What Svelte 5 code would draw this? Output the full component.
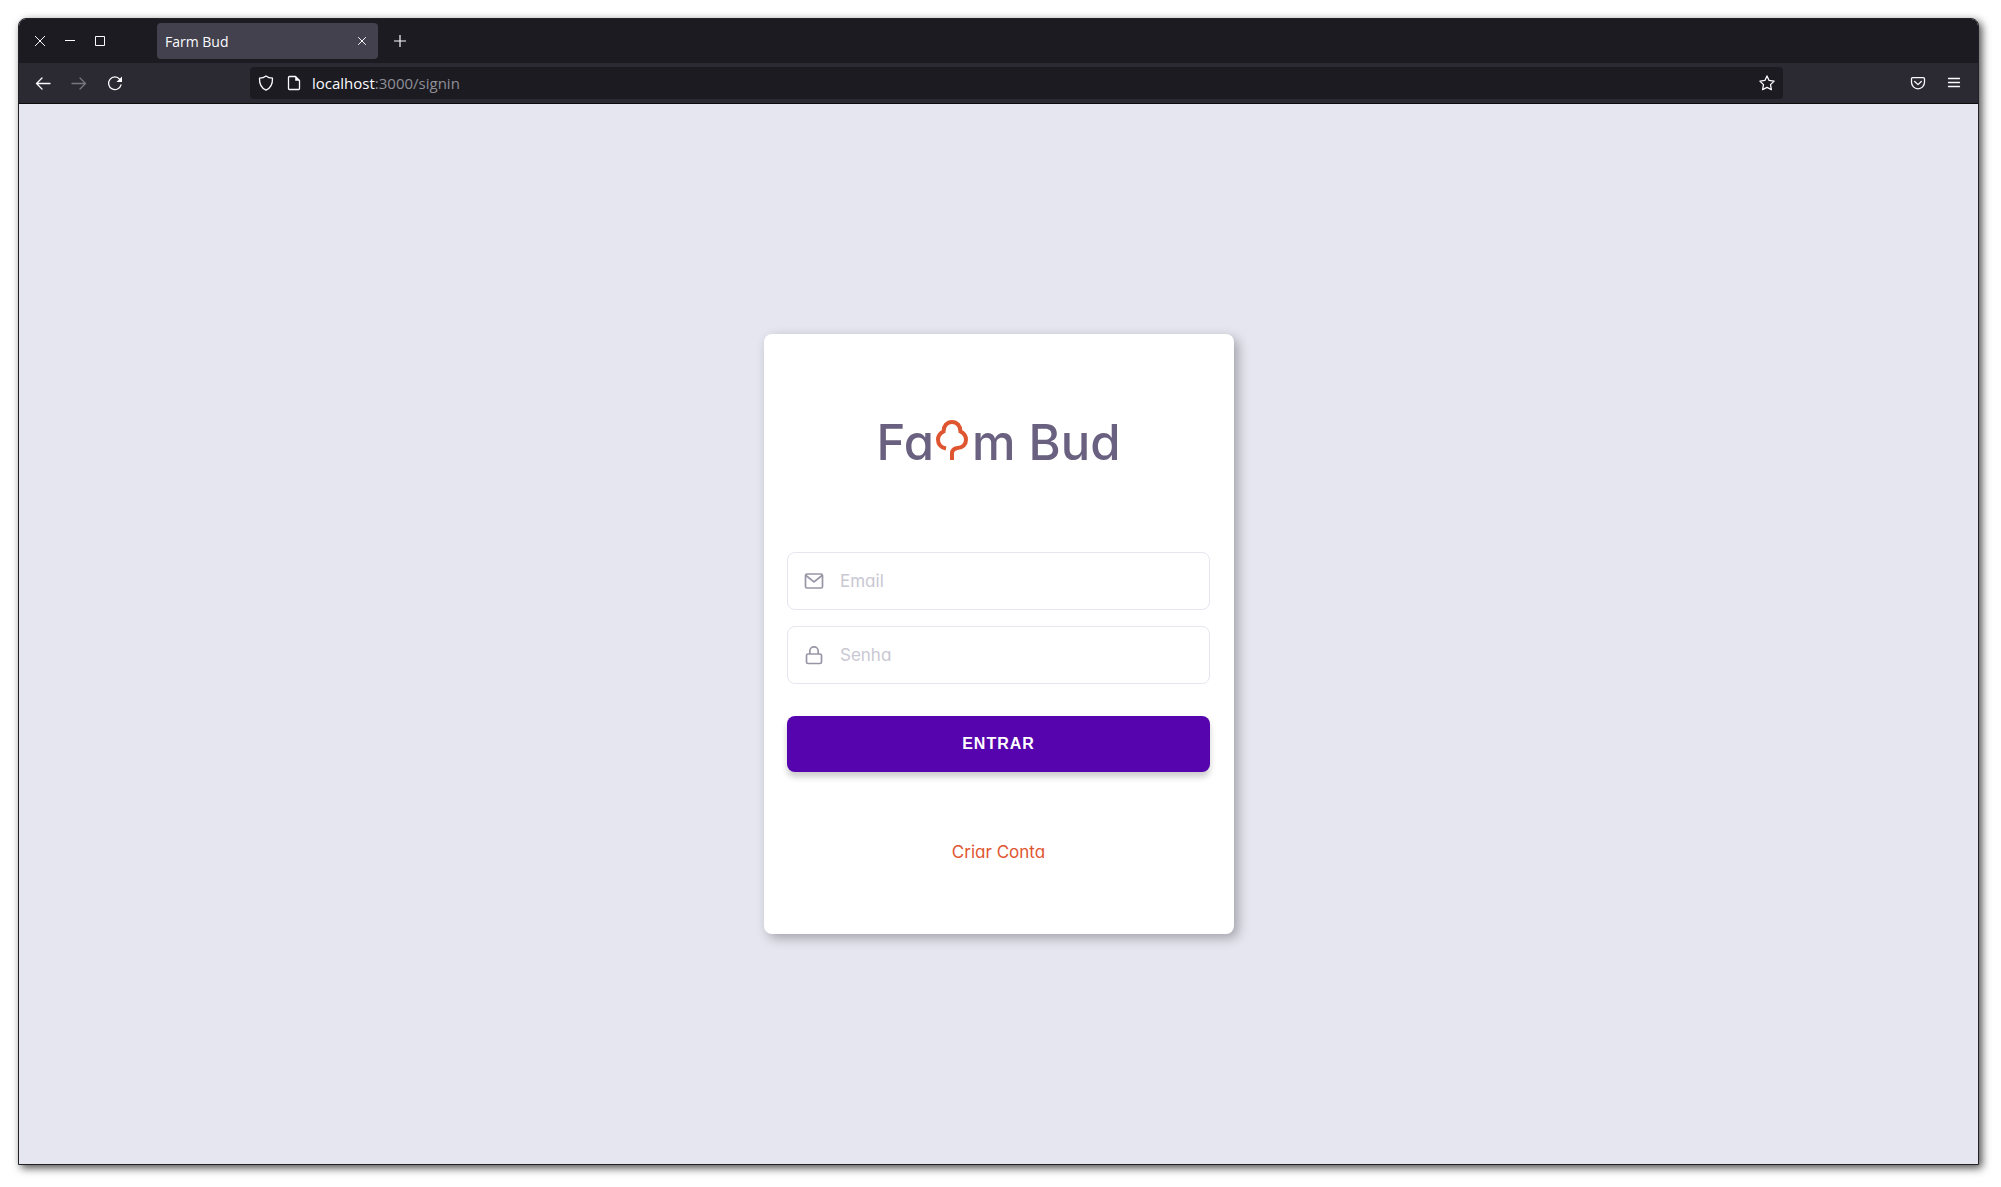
<script>
  let email = $state('');
  let password = $state('');
</script>

<div class="desktop">
  <div class="window">
    <header class="titlebar">
      <button class="win" aria-label="Close window"><svg viewBox="0 0 16 16"><path d="M3 3l10 10M13 3L3 13" /></svg></button>
      <button class="win" aria-label="Minimize"><svg viewBox="0 0 16 16"><path d="M3 7.5h10" /></svg></button>
      <button class="win" aria-label="Maximize"><svg viewBox="0 0 16 16"><path d="M3.5 3.5h9v9h-9z" /></svg></button>
      <div class="tab">
        <span>Farm Bud</span>
        <button class="close" aria-label="Close tab"><svg viewBox="0 0 16 16"><path d="M4.2 4.2l7.6 7.6M11.8 4.2l-7.6 7.6" /></svg></button>
      </div>
      <button class="plus" aria-label="New tab"><svg viewBox="0 0 16 16"><path d="M8 2v12M2 8h12" /></svg></button>
    </header>

    <nav class="toolbar">
      <button class="tool" aria-label="Back"><svg viewBox="0 0 16 16"><path d="M15 8.5H1.500M7 3L1.500 8.500L7 14" /></svg></button>
      <button class="tool dim" aria-label="Forward" disabled><svg viewBox="0 0 16 16"><path d="M1 8.500h13.500M9 3L14.500 8.500L9 14" /></svg></button>
      <button class="tool" aria-label="Reload"><svg viewBox="0 0 16 16"><path d="M14 9.800A6.300 6.300 0 1 1 12.800 4.300" /><path class="solid" d="M15 1.500v5.500H9.500z" /></svg></button>
      <span class="spring"></span>
      <div class="url">
        <svg viewBox="0 0 16 16"><path d="M8 .9C6.200 2.300 3.900 3 1.500 3.200C1.300 8.800 3.300 13 8 15.200C12.700 13 14.700 8.800 14.500 3.200C12.100 3 9.800 2.300 8 .9z" /></svg>
        <svg class="page" viewBox="0 0 16 16"><path d="M3.500 1.500h6l4 4v8q0 1-1 1h-9q-1 0-1-1v-11q0-1 1-1z" /><path class="solid" d="M9.200 1l4.800 4.800H9.200z" /></svg>
        <span class="address">localhost<i>:3000/signin</i></span>
        <button class="star" aria-label="Bookmark"><svg viewBox="0 0 16 16"><path d="M8 .9l2.100 4.500 5 .7-3.600 3.500.9 5L8 12.400l-4.400 2.200.9-5L.9 6.100l5-.7z" /></svg></button>
      </div>
      <span class="spring"></span>
      <button class="tool" aria-label="Save to Pocket"><svg viewBox="0 0 16 16"><path d="M2.700 2.600h10.600q1.200 0 1.200 1.200v3.500a6.500 6.500 0 0 1-13 0V3.800q0-1.200 1.200-1.200zM4.700 6.500L8 9.600l3.300-3.100" /></svg></button>
      <button class="tool" aria-label="Menu"><svg viewBox="0 0 16 16"><path d="M2.500 3.500h11M2.500 7.500h11M2.500 11.500h11" /></svg></button>
    </nav>

    <main>
      <section class="card">
        <h1 aria-label="Farm Bud">
          <span>Fa</span>
          <svg viewBox="0 0 32 40" aria-hidden="true"><path d="M10 28.500C5 27.500 2 24 2 19.700C2 16 4.500 13 7.500 11.500C7.500 6 11 2 16 2S24.500 6 24.500 11.500C27.500 13 30 16 30 19.700C30 24.500 26.500 28 21.500 28C18 28.500 16 30.500 16 33.500V40" /></svg>
          <span>m Bud</span>
        </h1>
        <form onsubmit={(e) => e.preventDefault()}>
          <label class="field">
            <svg viewBox="0 0 24 24"><rect x="3.500" y="5" width="17" height="14" rx="1.500" /><path d="M4 6.500l8 6.500L20 6.500" /></svg>
            <input type="email" placeholder="Email" aria-label="Email" bind:value={email} />
          </label>
          <label class="field">
            <svg viewBox="0 0 24 24"><rect x="4.500" y="11" width="15" height="9.500" rx="1.500" /><path d="M7.800 11V8a4.200 4.200 0 0 1 8.400 0v3" /></svg>
            <input type="password" placeholder="Senha" aria-label="Senha" bind:value={password} />
          </label>
          <button class="submit" type="submit">ENTRAR</button>
        </form>
        <a href="/signup">Criar Conta</a>
      </section>
    </main>
  </div>
</div>

<style>
  :global(body) {
    margin: 0;
    background: #fff;
  }
  * {
    box-sizing: border-box;
  }
  button {
    display: flex;
    align-items: center;
    justify-content: center;
    padding: 0;
    border: 0;
    background: none;
    color: inherit;
  }
  svg {
    flex: none;
    width: 16px;
    height: 16px;
    fill: none;
    stroke: currentColor;
  }
  .solid {
    fill: currentColor;
    stroke: none;
  }
  .desktop {
    display: flex;
    min-height: 100vh;
    padding: 18px 22px 22px 18px;
  }
  .window {
    display: flex;
    flex: 1;
    flex-direction: column;
    min-width: 0;
    border: 1px solid #222126;
    border-radius: 8px 8px 0 0;
    background: #e6e6f0;
    box-shadow: 3px 3px 8px rgba(0, 0, 0, 0.7);
    overflow: hidden;
  }
  .titlebar {
    display: flex;
    align-items: center;
    height: 44px;
    padding-left: 6px;
    background: #1c1b22;
    color: #fbfbfe;
    font: 14px 'Open Sans', sans-serif;
  }
  .win {
    width: 30px;
    height: 30px;
  }
  .tab {
    display: flex;
    align-items: center;
    justify-content: space-between;
    width: 221px;
    height: 36px;
    margin-left: 42px;
    padding: 0 8px;
    border-radius: 4px;
    background: #42414d;
  }
  .plus {
    width: 43px;
    height: 36px;
  }
  .plus svg {
    stroke-width: 1.2;
  }
  .toolbar {
    display: flex;
    align-items: center;
    height: 41px;
    padding: 0 6px;
    border-bottom: 1px solid #0c0c0d;
    background: #2b2a33;
    color: #fbfbfe;
  }
  .toolbar svg {
    stroke-width: 1.3;
    stroke-linecap: round;
    stroke-linejoin: round;
  }
  .tool {
    width: 36px;
    height: 32px;
  }
  .dim {
    color: #77767e;
  }
  .spring {
    flex: 0 1 117px;
  }
  .url {
    display: flex;
    flex: 1;
    align-items: center;
    height: 32px;
    padding: 0 8px;
    border-radius: 4px;
    background: #1c1b22;
  }
  .page {
    margin: 0 10px 0 12px;
  }
  .address {
    flex: 1;
    font: 15px 'Open Sans', sans-serif;
  }
  .address i {
    color: #8f8f97;
    font-style: normal;
  }
  main {
    display: flex;
    flex: 1;
    align-items: center;
    justify-content: center;
    padding: 24px;
  }
  .card {
    display: flex;
    flex-direction: column;
    align-items: center;
    width: 470px;
    max-width: 100%;
    padding: 79px 0 70px;
    border-radius: 8px;
    background: #fff;
    box-shadow: 4px 4px 12px rgba(0, 0, 0, 0.3);
    font-family: Inter, sans-serif;
    font-feature-settings: 'cv11';
  }
  h1 {
    display: flex;
    align-items: baseline;
    margin: 0 0 79px;
    color: #6a6180;
    font-size: 49px;
    font-weight: 500;
    line-height: 60px;
  }
  h1 svg {
    width: 32px;
    height: 40px;
    margin: 0 4px 0 2px;
    color: #df5530;
    stroke-width: 4;
  }
  form {
    display: flex;
    flex-direction: column;
    gap: 16px;
    width: 90%;
  }
  .field {
    display: flex;
    align-items: center;
    height: 58px;
    padding: 0 14px;
    border: 1px solid #e6e6f0;
    border-radius: 8px;
    color: #9896a6;
  }
  .field svg {
    width: 24px;
    height: 24px;
    stroke-width: 1.7;
  }
  input {
    flex: 1;
    min-width: 0;
    height: 100%;
    padding: 0 0 0 14px;
    border: 0;
    outline: 0;
    background: none;
    color: #6a6180;
    font: 17px Inter, sans-serif;
    font-feature-settings: 'cv11';
  }
  input::placeholder {
    color: #c9c8d2;
  }
  .submit {
    height: 56px;
    margin-top: 16px;
    border-radius: 8px;
    background: #5604ae;
    box-shadow: 0 5px 6px rgba(0, 0, 0, 0.2);
    color: #fff;
    font: bold 16px 'Liberation Sans', Arial, sans-serif;
    letter-spacing: 1px;
  }
  a {
    margin-top: 68px;
    color: #df5530;
    font-size: 17px;
    line-height: 24px;
    text-decoration: none;
  }
</style>
